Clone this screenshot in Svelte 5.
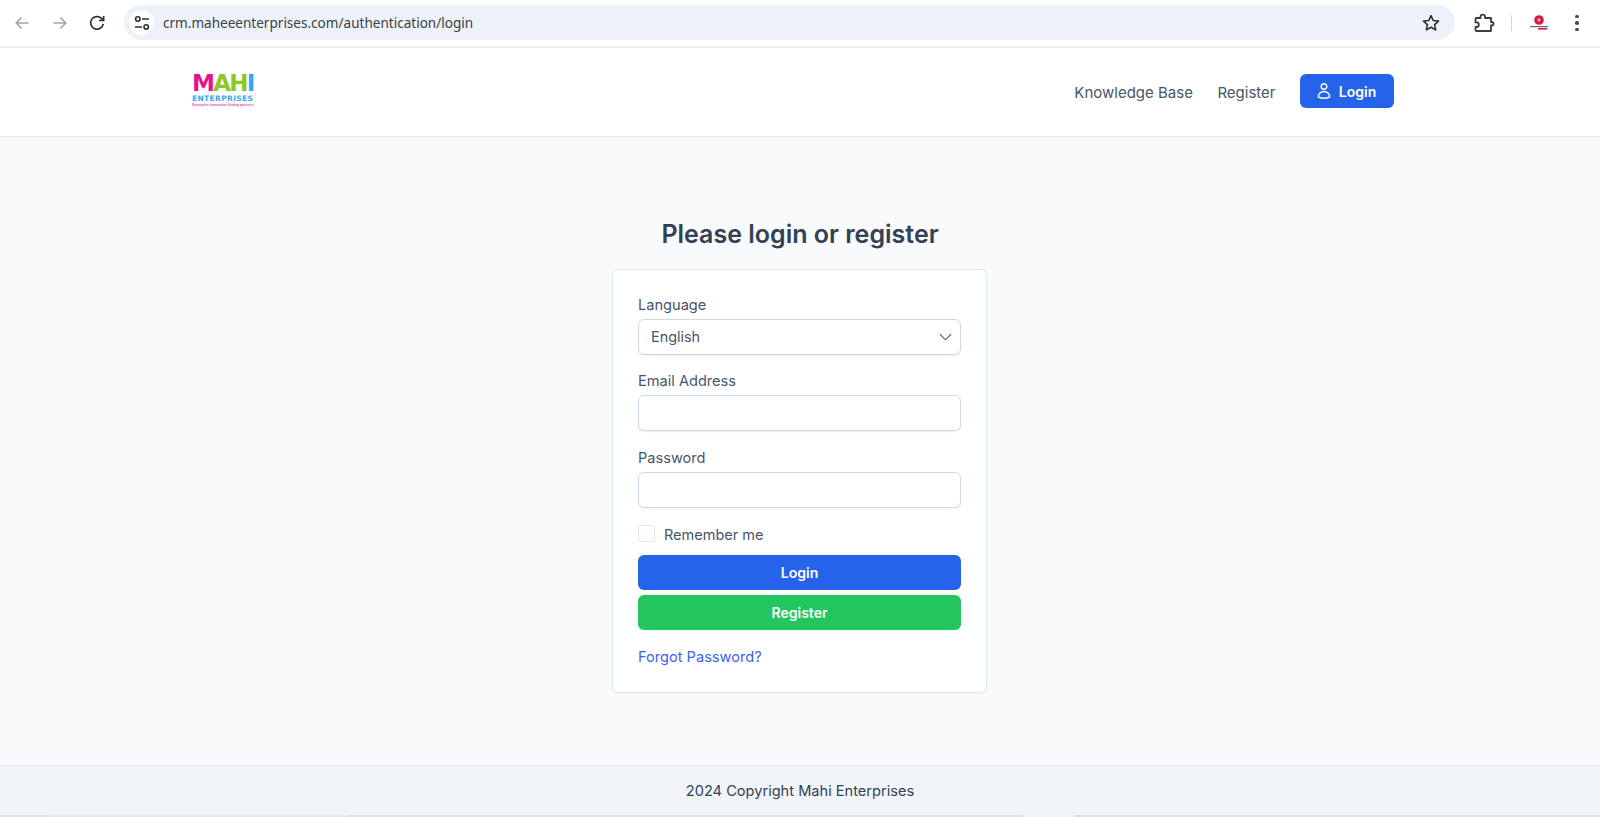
<script>
	let email = "";
	let password = "";
	let remember = false;
</script>

<div class="page">
	<header class="chrome">
		<div class="chrome_nav">
			<svg viewBox="0 0 24 24" width="20" height="20"><path d="M20 12H5M11.500 5.500 5 12l6.500 6.500" fill="none" stroke="#a3a5a8" stroke-width="1.900"/></svg>
			<svg viewBox="0 0 24 24" width="20" height="20"><path d="M4 12h15M12.500 5.500 19 12l-6.500 6.500" fill="none" stroke="#a3a5a8" stroke-width="1.900"/></svg>
			<svg viewBox="0 0 24 24" width="20" height="20"><path d="M19.500 13a7.600 7.600 0 1 1-2.100-6.500L20 9M20 3.500V9h-5.500" fill="none" stroke="#2b2d30" stroke-width="2"/></svg>
		</div>
		<div class="omnibox">
			<span class="tune">
				<svg viewBox="0 0 20 20" width="20" height="20"><circle cx="5.800" cy="6" r="2.200" fill="none" stroke="#2b2d30" stroke-width="1.600"/><path d="M10 6h7M3 14h7" stroke="#2b2d30" stroke-width="1.600"/><circle cx="14.200" cy="14" r="2.200" fill="none" stroke="#2b2d30" stroke-width="1.600"/></svg>
			</span>
			<span class="url">crm.maheeenterprises.com/authentication/login</span>
			<svg class="star" viewBox="0 0 24 24" width="22" height="22"><path d="m12 4 2.400 5.300 5.800.6-4.300 3.900 1.200 5.700-5.100-2.900-5.100 2.900 1.200-5.700-4.300-3.900 5.800-.6z" fill="none" stroke="#2b2d30" stroke-width="1.700" stroke-linejoin="round"/></svg>
		</div>
		<div class="chrome_tools">
			<svg viewBox="0 0 24 24" width="24" height="24"><path d="M5 7h4.500V6a2.300 2.300 0 0 1 4.600 0v1H20v4h.8a1.700 1.700 0 0 1 0 3.400H20V20H5.500a1 1 0 0 1-1-1v-3h1a2.300 2.300 0 0 0 0-4.600h-1V8a1 1 0 0 1 .5-1z" fill="none" stroke="#3a3c3f" stroke-width="1.800" stroke-linejoin="round"/></svg>
			<span class="tool_sep"></span>
			<span class="avatar">
				<svg viewBox="0 0 20 16" width="20" height="16">
					<circle cx="10" cy="5" r="4.800" fill="#d81b4a"/>
					<circle cx="10" cy="5" r="1.400" fill="#f6c2d0"/>
					<rect x="1" y="11" width="18" height="1.200" fill="#666"/>
					<rect x="9" y="13" width="9" height="1.600" fill="#d81b4a"/>
				</svg>
			</span>
			<span class="kebab"><i></i><i></i><i></i></span>
		</div>
	</header>

	<nav class="topnav">
		<a class="logo" href="/">
			<span class="logo_main"><span class="m">M</span><span class="ah">AH</span><span class="i">I</span></span>
			<span class="logo_sub">ENTERPRISES</span>
			<span class="logo_tag">Enterprise innovation finding partners</span>
		</a>
		<ul class="nav_links">
			<li><a href="/">Knowledge Base</a></li>
			<li><a href="/">Register</a></li>
			<li class="login_item">
				<a class="nav_login" href="/">
					<svg viewBox="0 0 24 24" width="18" height="18" fill="none" stroke="#fff" stroke-width="1.900" stroke-linecap="round" stroke-linejoin="round"><path d="M15.750 6a3.750 3.750 0 1 1-7.500 0 3.750 3.750 0 0 1 7.500 0ZM4.500 20.120a7.500 7.500 0 0 1 15 0A17.900 17.900 0 0 1 12 21.750c-2.680 0-5.220-.58-7.500-1.630Z"/></svg>
					Login
				</a>
			</li>
		</ul>
	</nav>

	<main>
		<h1>Please login or register</h1>
		<form class="card" on:submit|preventDefault>
			<div class="field">
				<label for="language">Language</label>
				<div class="select_wrap">
					<select id="language">
						<option>English</option>
					</select>
					<svg viewBox="0 0 14 8" width="13" height="8"><path d="M1 1l6 6 6-6" fill="none" stroke="#475569" stroke-width="1.200"/></svg>
				</div>
			</div>
			<div class="field">
				<label for="email">Email Address</label>
				<input id="email" type="email" bind:value={email} />
			</div>
			<div class="field">
				<label for="password">Password</label>
				<input id="password" type="password" bind:value={password} />
			</div>
			<label class="remember">
				<input type="checkbox" bind:checked={remember} />
				<span>Remember me</span>
			</label>
			<button class="btn login" type="submit">Login</button>
			<button class="btn register" type="button">Register</button>
			<a class="forgot" href="/">Forgot Password?</a>
		</form>
	</main>

	<footer>2024 Copyright Mahi Enterprises</footer>
	<div class="strip"><span class="seg_a"></span><span class="seg_b"></span></div>
</div>

<style>
	:global(body) {
		margin: 0;
		font-family: Inter, "Noto Sans", sans-serif;
	}

	.page {
		height: 817px;
		display: flex;
		flex-direction: column;
		overflow: hidden;
		background: #f8fafc;
	}

	.chrome {
		height: 46px;
		flex: none;
		display: flex;
		align-items: center;
		background: #fff;
		border-bottom: 2px solid #eceef0;
	}

	.chrome_nav {
		display: flex;
		gap: 17.500px;
		padding-left: 12px;
		width: 112px;
		flex: none;
	}

	.omnibox {
		width: 1331px;
		height: 35px;
		margin-bottom: 1px;
		flex: none;
		display: flex;
		align-items: center;
		background: #edf2fa;
		border-radius: 18px;
	}

	.tune {
		width: 25px;
		height: 25px;
		margin-left: 5px;
		border-radius: 50%;
		background: #fff;
		display: flex;
		align-items: center;
		justify-content: center;
	}

	.url {
		margin-left: 9px;
		font-family: "Noto Sans", sans-serif;
		font-size: 13.550px;
		color: #3c4043;
		flex: 1;
	}

	.star {
		margin-right: 13px;
	}

	.chrome_tools {
		display: flex;
		align-items: center;
		padding-left: 16px;
	}

	.tool_sep {
		width: 1px;
		height: 16px;
		background: #c9d7ee;
		margin-left: 16px;
	}

	.avatar {
		margin-left: 17px;
		display: flex;
	}

	.kebab {
		margin-left: 26px;
		display: flex;
		flex-direction: column;
		gap: 3px;
	}

	.kebab i {
		width: 3.500px;
		height: 3.500px;
		border-radius: 50%;
		background: #47494c;
	}

	.topnav {
		flex: none;
		height: 88px;
		display: flex;
		align-items: center;
		justify-content: space-between;
		padding: 0 206px 0 192px;
		background: #fff;
		border-bottom: 1px solid #e2e8f0;
	}

	.logo {
		display: flex;
		flex-direction: column;
		width: 62px;
		margin-top: -3px;
		text-decoration: none;
		font-weight: 700;
		line-height: 1;
	}

	.logo_main {
		font-family: "DejaVu Sans", sans-serif;
		font-weight: 700;
		font-size: 23px;
		height: 18px;
		line-height: 18px;
		letter-spacing: -1.700px;
		white-space: nowrap;
	}

	.m { color: #ec0f8f; }
	.ah { color: #8ac926; }
	.i { color: #33a9f4; }

	.logo_sub {
		font-family: "DejaVu Sans", sans-serif;
		font-size: 7.500px;
		height: 8px;
		line-height: 8px;
		margin-top: 3px;
		color: #33a9f4;
		letter-spacing: 0.350px;
		white-space: nowrap;
	}

	.logo_tag {
		font-family: "Liberation Sans", sans-serif;
		font-size: 3.400px;
		height: 3px;
		line-height: 3px;
		margin-top: 1px;
		color: #ec4fa8;
		white-space: nowrap;
	}

	.nav_links {
		list-style: none;
		margin: 0;
		padding: 0;
		display: flex;
		align-items: center;
		gap: 24.500px;
	}

	.login_item {
		margin-bottom: 2px;
	}

	.nav_links a {
		color: #475569;
		font-size: 15px;
		font-weight: 400;
		text-decoration: none;
	}

	.nav_links .nav_login {
		display: flex;
		align-items: center;
		justify-content: center;
		gap: 6px;
		width: 94px;
		height: 34px;
		box-sizing: border-box;
		padding-right: 3px;
		background: #2563eb;
		color: #fff;
		border-radius: 6px;
		font-size: 14px;
		font-weight: 600;
	}

	main {
		flex: 1;
		display: flex;
		flex-direction: column;
		align-items: center;
		padding-top: 79px;
		box-sizing: border-box;
	}

	h1 {
		margin: 0 0 17px;
		font-size: 25px;
		line-height: 36px;
		font-weight: 600;
		color: #334155;
	}

	.card {
		width: 375px;
		height: 424px;
		margin-right: 1px;
		box-sizing: border-box;
		padding: 25px 25px 0;
		display: flex;
		flex-direction: column;
		background: #fff;
		border: 1px solid #e2e8f0;
		border-radius: 6px;
		box-shadow: 0 1px 2px rgba(15, 23, 42, 0.04);
	}

	.field {
		margin-bottom: 16.400px;
		display: flex;
		flex-direction: column;
	}

	.field label {
		font-size: 14.600px;
		line-height: 20px;
		color: #475569;
		font-weight: 400;
		margin-bottom: 4px;
	}

	input, select {
		font-family: inherit;
	}

	.field input,
	.select_wrap select {
		width: 100%;
		height: 36px;
		box-sizing: border-box;
		background: #fff;
		border: 1px solid #cfd8ea;
		border-radius: 6px;
		box-shadow: 0 1px 2px rgba(15, 23, 42, 0.05);
		padding: 0 12px 1px;
		font-size: 14.400px;
		color: #475569;
		outline: none;
	}

	.select_wrap {
		position: relative;
	}

	.select_wrap select {
		appearance: none;
		display: block;
	}

	.select_wrap svg {
		position: absolute;
		right: 9px;
		top: 14px;
	}

	.remember {
		display: flex;
		align-items: center;
		gap: 9px;
		height: 20px;
		margin: -1px 0 11.800px;
		font-size: 14.500px;
		color: #475569;
	}

	.remember span {
		padding-top: 2px;
	}

	.remember input {
		appearance: none;
		width: 17px;
		height: 17px;
		margin: 0;
		background: #fff;
		border: 1px solid #e2e8f0;
		border-radius: 3px;
	}

	.btn {
		height: 35px;
		border: none;
		border-radius: 6px;
		color: #fff;
		font-family: inherit;
		font-size: 14px;
		font-weight: 600;
		margin-bottom: 5px;
	}

	.login {
		background: #2563eb;
	}

	.register {
		background: #22c55e;
	}

	.forgot {
		margin-top: 12px;
		font-size: 14.600px;
		line-height: 20px;
		color: #3b63f0;
		text-decoration: none;
	}

	footer {
		flex: none;
		height: 50px;
		padding-top: 1px;
		box-sizing: border-box;
		display: flex;
		align-items: center;
		justify-content: center;
		background: #f1f5f9;
		border-top: 1px solid #e2e8f0;
		font-size: 14.600px;
		color: #334155;
	}

	.strip {
		flex: none;
		height: 2px;
		background: #ecdcd8;
		display: flex;
	}

	.seg_a {
		width: 300px;
		margin-left: 49px;
		background: #e6e8ea;
	}

	.seg_b {
		width: 51px;
		margin-left: 674px;
		background: #f4f1ef;
	}
</style>
